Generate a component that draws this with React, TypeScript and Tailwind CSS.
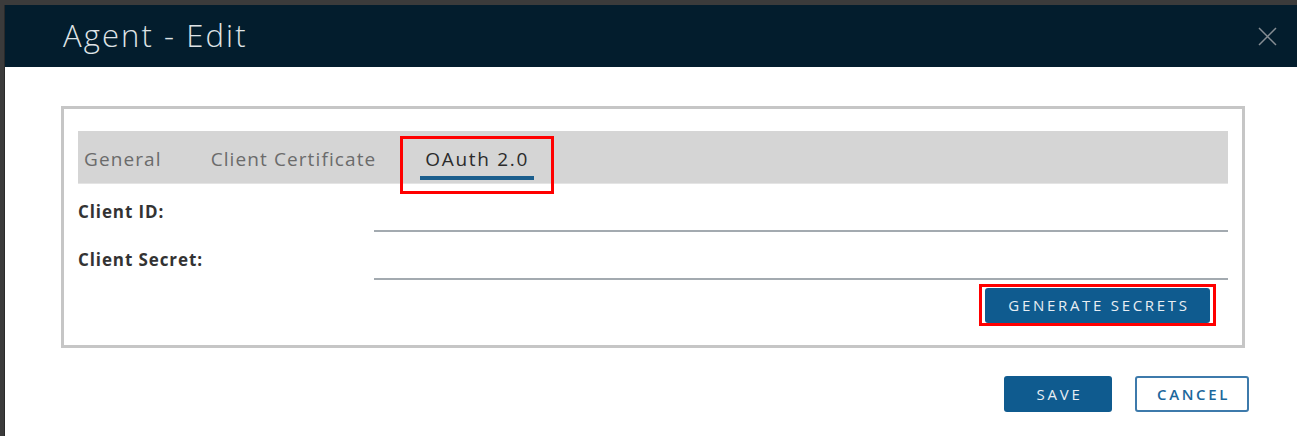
import React from "react";

export default function App() {
  const font = { fontFamily: "'Open Sans', Lato, sans-serif" };
  return (
    <div className="w-[1297px] h-[436px] bg-[#3b3b3b] pt-[5px] pl-[4px] overflow-hidden" style={font}>
      <div className="h-full w-[1300px] bg-white border-l border-[#2a2a2a] flex flex-col">
        <div className="h-[62px] bg-[#031d2d] flex items-center justify-between pl-[58px] pr-[27px] shrink-0">
          <div className="text-[31px] font-light text-[#dfe3e6] tracking-[2.1px] leading-none pb-[2px]">Agent - Edit</div>
          <svg width="19" height="19" viewBox="0 0 19 19">
            <path d="M1 1 L18 18 M18 1 L1 18" stroke="#868d93" strokeWidth="1.5" fill="none" />
          </svg>
        </div>
        <div className="pl-[56px] pt-[39px]">
          <div className="w-[1184px] border-[3px] border-[#c6c6c6] pt-[22px] px-[14px] pb-[22px]">
            <div className="h-[53px] bg-[#d5d5d5] border-b border-[#e4e4e4] flex items-stretch pl-[1px]">
              <div className="px-[5px] flex items-center text-[19px] text-[#6b6b6b] tracking-[1.1px] pt-[4px]">General</div>
              <div className="ml-[39px] px-[5px] flex items-center text-[19px] text-[#6b6b6b] tracking-[1.1px] pt-[4px]">Client Certificate</div>
              <div className="ml-[39px] px-[5px] flex items-center text-[19px] text-[#2b2b2b] tracking-[1.7px] pt-[4px] relative">
                OAuth 2.0
                <span className="absolute left-0 right-0 bottom-[3px] h-[4px] bg-[#1b5e8d]" />
                <span className="absolute left-[-20px] right-[-20px] top-[5px] bottom-[-11px] border-[3px] border-[#ff0000]" />
              </div>
            </div>
            <div className="flex items-end h-[48px]">
              <div className="w-[296px] self-center pt-[8px] text-[17px] font-bold text-[#333] tracking-[0.9px]">Client ID:</div>
              <div className="flex-1 h-[2px] bg-[#a3aab0]" />
            </div>
            <div className="flex items-end h-[48px]">
              <div className="w-[296px] self-center pt-[8px] text-[17px] font-bold text-[#333] tracking-[0.9px]">Client Secret:</div>
              <div className="flex-1 h-[2px] bg-[#a3aab0]" />
            </div>
            <div className="flex justify-end pr-[18px] pt-[8px]">
              <div className="relative">
                <button className="h-[35px] w-[225px] rounded-[3px] bg-[#0f5b8f] text-[#e8eef3] text-[15px] tracking-[2.7px] font-medium pl-[3px]">
                  GENERATE SECRETS
                </button>
                <span className="absolute left-[-6px] right-[-6px] top-[-4px] bottom-[-3px] border-[3px] border-[#ff0000]" />
              </div>
            </div>
          </div>
          <div className="w-[1188px] flex justify-end gap-[23px] pt-[28px]">
            <button className="h-[36px] w-[108px] rounded-[3px] bg-[#0f5b8f] text-[#e8eef3] text-[15px] tracking-[2.8px] font-medium pl-[3px]">SAVE</button>
            <button className="h-[36px] w-[114px] rounded-[3px] border-2 border-[#3d7aab] text-[#1c679c] bg-white text-[15px] tracking-[2.6px] font-semibold pl-[3px]">CANCEL</button>
          </div>
        </div>
      </div>
    </div>
  );
}
